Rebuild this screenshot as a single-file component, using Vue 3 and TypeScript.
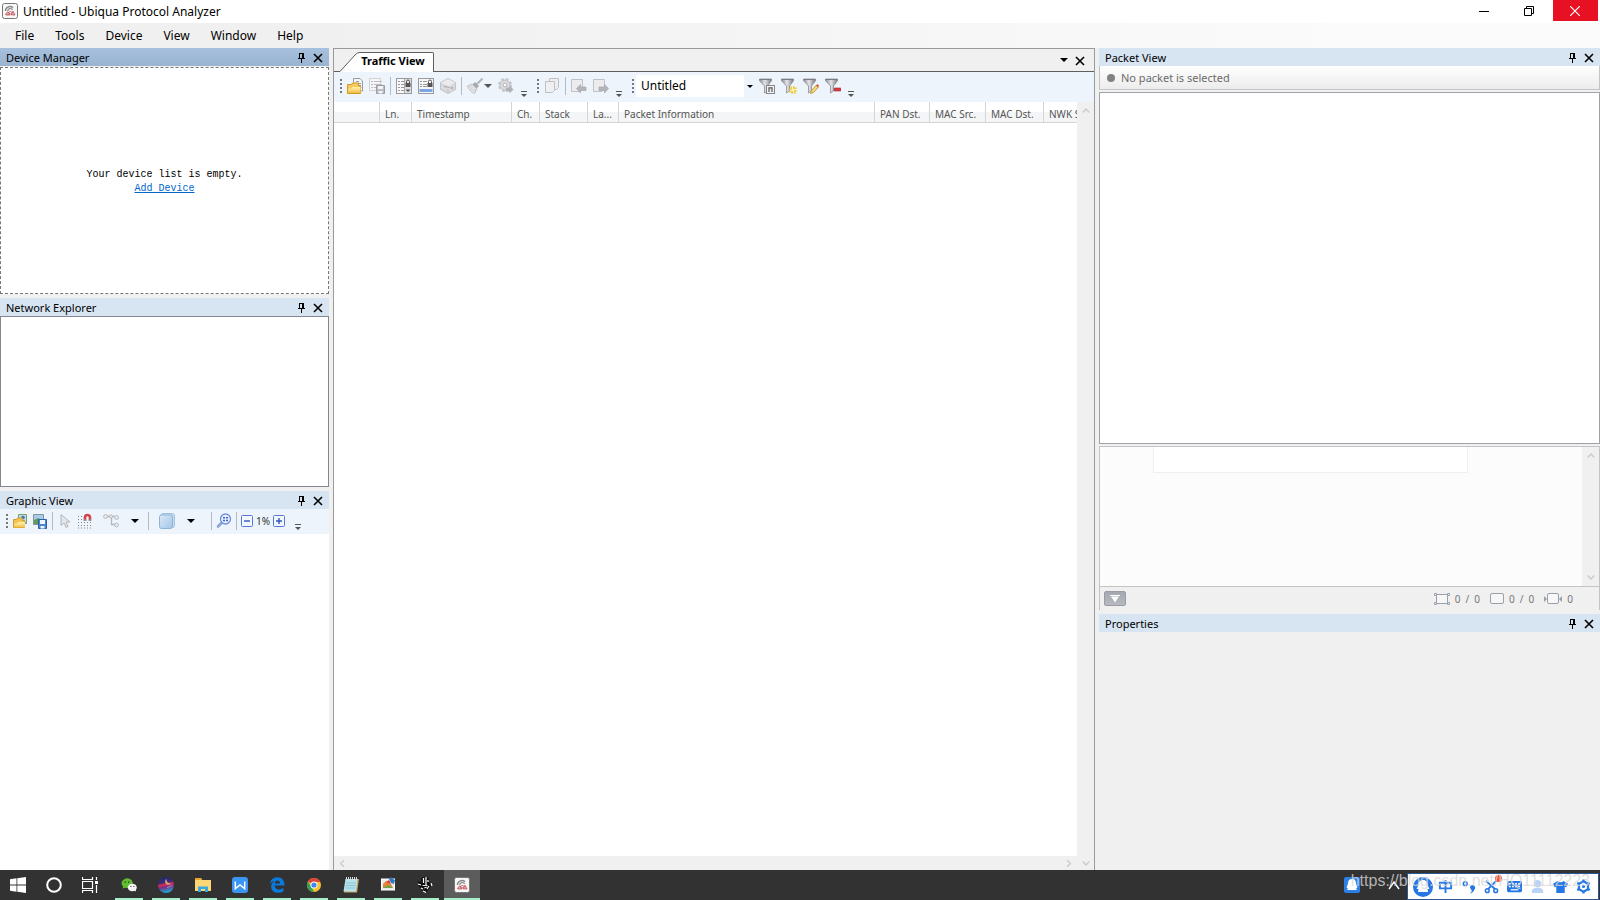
<script setup lang="ts">
import { ref } from 'vue'

interface Tool { kind: 'grip' | 'sep' | 'more' | 'btn' | 'filter' | 'drop'; icon?: string; label?: string }
interface Column { title: string; width: number }

const menus: string[] = ['File', 'Tools', 'Device', 'View', 'Window', 'Help']
const profile = ref('Untitled')

const trafficTools: Tool[] = [
  { kind: 'grip' },
  { kind: 'btn', icon: 'open', label: 'Open' },
  { kind: 'btn', icon: 'save', label: 'Save' },
  { kind: 'sep' },
  { kind: 'btn', icon: 'lockscroll', label: 'Lock scroll' },
  { kind: 'btn', icon: 'lockrow', label: 'Lock selection' },
  { kind: 'btn', icon: 'cube', label: 'Packets' },
  { kind: 'sep' },
  { kind: 'drop', icon: 'broom', label: 'Clear' },
  { kind: 'btn', icon: 'gear', label: 'Options' },
  { kind: 'more', label: 'More traffic tools' },
  { kind: 'grip' },
  { kind: 'btn', icon: 'copy', label: 'Copy' },
  { kind: 'sep' },
  { kind: 'btn', icon: 'prev', label: 'Previous' },
  { kind: 'btn', icon: 'next', label: 'Next' },
  { kind: 'more', label: 'More packet tools' },
  { kind: 'grip' },
  { kind: 'filter' },
  { kind: 'btn', icon: 'funneln', label: 'Apply filter' },
  { kind: 'btn', icon: 'funnelnew', label: 'New filter' },
  { kind: 'btn', icon: 'funneledit', label: 'Edit filter' },
  { kind: 'btn', icon: 'funneldel', label: 'Delete filter' },
  { kind: 'more', label: 'More filter tools' },
]

const columns: Column[] = [
  { title: '', width: 46 },
  { title: 'Ln.', width: 32 },
  { title: 'Timestamp', width: 100 },
  { title: 'Ch.', width: 28 },
  { title: 'Stack', width: 48 },
  { title: 'La...', width: 31 },
  { title: 'Packet Information', width: 256 },
  { title: 'PAN Dst.', width: 55 },
  { title: 'MAC Src.', width: 56 },
  { title: 'MAC Dst.', width: 58 },
  { title: 'NWK Src.', width: 58 },
]

const apps: string[] = ['wechat', 'eclipse', 'folder', 'wps', 'edge', 'chrome', 'notepad', 'paint', 'hand', 'ubiqua']
const ime: string[] = ['qq', 'zh', 'comma', 'cut', 'keys', 'person', 'shirt', 'cog']
</script>

<template>
  <div class="app">
    <svg class="defs" aria-hidden="true">
      <defs>
        <linearGradient id="g-funnel" x1="0" x2="1"><stop offset="0" stop-color="#8b8b92" /><stop offset=".45" stop-color="#e4e4ea" /><stop offset="1" stop-color="#77777e" /></linearGradient>
        <linearGradient id="g-fold" x1="0" y1="0" x2="0" y2="1"><stop offset="0" stop-color="#fff3b4" /><stop offset="1" stop-color="#f2bd44" /></linearGradient>
        <linearGradient id="g-blue" x1="0" y1="0" x2="1" y2="1"><stop offset="0" stop-color="#dcebf8" /><stop offset="1" stop-color="#9fc4e6" /></linearGradient>
        <linearGradient id="g-ecl" x1="0" y1="0" x2=".2" y2="1"><stop offset="0" stop-color="#1c2a6c" /><stop offset=".4" stop-color="#3a2a78" /><stop offset=".55" stop-color="#d8304c" /><stop offset=".68" stop-color="#7a2a86" /><stop offset="1" stop-color="#22a0cc" /></linearGradient>
      </defs>
      <symbol id="i-pin" viewBox="0 0 9 10"><path d="M2 .5h5M2.500 .5v5M5.500 .5v5M6.500 .5v5M1 5.500h7M4.500 6v4" fill="none" stroke="#000" /></symbol>
      <symbol id="i-x" viewBox="0 0 10 10"><path d="M1 1l8 8M9 1L1 9" fill="none" stroke="#000" stroke-width="1.600" /></symbol>
      <symbol id="i-down" viewBox="0 0 8 4"><path d="M0 0h8L4 4z" fill="currentColor" /></symbol>
      <symbol id="i-more" viewBox="0 0 8 7"><path d="M1 .5h6" stroke="#555" /><path d="M1 3h6L4 6z" fill="#555" /></symbol>
      <symbol id="i-chev" viewBox="0 0 8 5"><path d="M.7 4.500L4 1l3.300 3.500" fill="none" stroke="#cbcbcb" stroke-width="1.400" /></symbol>

      <symbol id="i-ubiqua" viewBox="0 0 16 16"><rect x=".5" y=".5" width="15" height="15" rx="2" fill="#f7f7f7" stroke="#777" /><path d="M3.500 8a4.500 4 0 0 1 7.500-3.300" fill="none" stroke="#888" stroke-width="1.500" /><path d="M6 8a2.200 2 0 0 1 4.500-.8" fill="none" stroke="#888" stroke-width="1.200" /><path d="M3.500 11l2.500-2.300 1.800 3.300H4zM9 11.800l2-3.600 2 3.800z" fill="#e6a5aa" stroke="#c04a54" stroke-width=".8" /><circle cx="8.300" cy="9.600" r="1.300" fill="#fff" stroke="#c04a54" stroke-width=".8" /></symbol>

      <symbol id="i-open" viewBox="0 0 16 16"><path d="M6.500.5H13L15.500 3v10h-9z" fill="#f5f5f5" stroke="#9b9b9b" /><path d="M9 3.500h3M8 5.500h6M11 7.500h3M13 9.500h1.500" stroke="#8da0b5" /><path d="M.5 15.500V6.500h4l1-1.500h6v3h2v7.500z" fill="#f5c95d" stroke="#cf9a20" /><path d="M1.500 15V10.500h3l1-1.500h8V15z" fill="url(#g-fold)" /></symbol>
      <symbol id="i-save" viewBox="0 0 16 16"><path d="M.5.500h11v12H.5z" fill="#f5f5f5" stroke="#d0d2d5" /><path d="M2 3.500h2M5 3.500h8M2 6.500h2M5 6.500h8M2 9.500h2M5 9.500h4" stroke="#b9bbc0" /><path d="M7.500 7.500h8v8h-8z" fill="#b9bcc2" stroke="#9a9da4" /><path d="M9 8h5v3H9zM9.500 13h4v2.500h-4z" fill="#f4f4f5" /></symbol>
      <symbol id="i-lockscroll" viewBox="0 0 16 16"><rect x=".5" y=".5" width="15" height="15" fill="#f8f8f8" stroke="#9b9b9b" /><path d="M2 3.500h2M5 3.500h3M2 6.500h2M5 6.500h3M2 9.500h2M5 9.500h3M2 12.500h2M5 12.500h3" stroke="#999" /><path d="M8.500 1v14" stroke="#aaa" /><rect x="9" y="1" width="6" height="14" fill="#dedee2" /><path d="M10.500 5V3.500a1.500 1.500 0 0 1 3 0V5" fill="none" stroke="#555" /><rect x="9.500" y="5" width="5" height="4" fill="#555" /><path d="M9.500 11.500h5L12 14z" fill="#555" /></symbol>
      <symbol id="i-lockrow" viewBox="0 0 16 16"><rect x=".5" y=".5" width="15" height="15" fill="#f6f6f6" stroke="#9b9b9b" /><path d="M2 3.500h2M5 3.500h4M2 6.500h2M5 6.500h4M2 8.500h2M5 8.500h4" stroke="#999" /><path d="M1.500 11h13v3h-13z" fill="#7ba5e5" /><path d="M10.500 5V3.500a1.500 1.500 0 0 1 3 0V5" fill="none" stroke="#555" /><rect x="9.500" y="5" width="5" height="4" fill="#555" /></symbol>
      <symbol id="i-cube" viewBox="0 0 16 16"><path d="M8 .5l7.500 4v7L8 15.500.5 11.500v-7z" fill="#d8d9dc" stroke="#c3c4c8" /><path d="M1 4.700L8 8l7-3.300L8 1z" fill="#ececee" /><path d="M8 8v7" stroke="#c2c3c7" /><path d="M1 9l4-2 6 2V7l4 3-4 3v-2z" fill="#b9babf" stroke="#eee" stroke-width=".6" /></symbol>
      <symbol id="i-broom" viewBox="0 0 16 16"><path d="M15.500.5L10 6" stroke="#b4b5b9" stroke-width="2" /><path d="M8 4l4 4-2.500 2.500L5.500 6.500z" fill="#a8a9ae" /><path d="M5 6l5 5-2.500 4.500c-3-1-6-4-7-7.500z" fill="#e4e5e8" stroke="#b5b6ba" stroke-width=".8" /><path d="M2.500 8.500l5.500 5.500M4 7.500l5 5" stroke="#b9babf" stroke-width=".8" stroke-dasharray="1.500 1" /></symbol>
      <symbol id="i-gear" viewBox="0 0 16 16"><circle cx="7" cy="7" r="5.700" fill="#d8d9dc" stroke="#c3c4c8" stroke-width="2.500" stroke-dasharray="2.500 2" /><circle cx="7" cy="7" r="4.800" fill="#dedfe2" stroke="#b8b9be" stroke-width=".7" /><circle cx="7" cy="7" r="2" fill="#f8f8f8" stroke="#b0b1b6" /><path d="M8 9.500h3.500V7.500l4 4-4 4v-2H8z" fill="#b1b2b7" /></symbol>
      <symbol id="i-copy" viewBox="0 0 16 16"><path d="M5.500 .5h9v9l-2 2h-7z" fill="#eee" stroke="#bfc0c4" /><path d="M1.500 3.500h9v9l-2 2h-7z" fill="#f0f0f2" stroke="#bfc0c4" /></symbol>
      <symbol id="i-prev" viewBox="0 0 16 16"><path d="M.5 1.500h11v9l-2.500 3H.5z" fill="#ececee" stroke="#c1c2c6" /><path d="M5.500 10.500l4-4V9H15v3.500H9.500V15z" fill="#b3b5ba" stroke="#a1a3a8" stroke-width=".6" /></symbol>
      <symbol id="i-next" viewBox="0 0 16 16"><path d="M.5 1.500h11v9l-2.500 3H.5z" fill="#ececee" stroke="#c1c2c6" /><path d="M15.500 10.500l-4-4V9H6v3.500h5.500V15z" fill="#b3b5ba" stroke="#a1a3a8" stroke-width=".6" /></symbol>
      <symbol id="i-funnel" viewBox="0 0 16 16"><path d="M.5 1h12v1.800L8.500 8v5l-3 2V8L.5 2.800z" fill="url(#g-funnel)" stroke="#8d8d93" stroke-width=".8" /><path d="M.5 1.500h12" stroke="#7c7c82" /></symbol>
      <symbol id="i-funneln" viewBox="0 0 16 16"><use href="#i-funnel" /><rect x="7.500" y="7.500" width="8" height="8" fill="#f3f3f3" stroke="#85858a" /><path d="M10 14V9.800h3V14" fill="none" stroke="#555" stroke-width="1.200" /></symbol>
      <symbol id="i-funnelnew" viewBox="0 0 16 16"><use href="#i-funnel" /><rect x="9.500" y="9.500" width="5" height="5" fill="#fff6b0" stroke="#edc944" stroke-width="2.400" stroke-dasharray="1.600 .9" /></symbol>
      <symbol id="i-funneledit" viewBox="0 0 16 16"><use href="#i-funnel" /><path d="M7.500 15.500l1-3 5-5.500 2 2-5 5.500z" fill="#f5dc70" stroke="#b18c2a" stroke-width=".8" /><path d="M13 7.500L14.300 6l1.700 1.700-1.200 1.500z" fill="#d4504c" /></symbol>
      <symbol id="i-funneldel" viewBox="0 0 16 16"><use href="#i-funnel" /><rect x="9" y="10" width="7" height="3" rx=".6" fill="#d43e46" stroke="#a92731" stroke-width=".6" /></symbol>

      <symbol id="i-gopen" viewBox="0 0 16 16"><path d="M6.500 1.500h8v9h-8z" fill="#bcd9f5" stroke="#7fa15d" /><path d="M7 10l3-4 4 4z" fill="#5d9a4b" /><circle cx="11" cy="4.500" r="1.800" fill="#3b7ba4" /><path d="M1.500 14.500v-8h3l1-1.500h5v2.500h2v7z" fill="#f3c452" stroke="#d39c28" /><path d="M2 14.500v-4h3l1-1.500h7v5.500z" fill="url(#g-fold)" /></symbol>
      <symbol id="i-gsave" viewBox="0 0 16 16"><path d="M1.500 1.500h10v10h-10z" fill="#a8cdec" stroke="#81939b" /><path d="M2 11V7l4-2 6 4v2z" fill="#5f9c57" /><path d="M6.500 6.500h8v9h-8z" fill="#4d85ce" stroke="#2e62a8" /><path d="M8 7h5v4H8zM8.500 13h4v2.500h-4z" fill="#eff5fb" /></symbol>
      <symbol id="i-cursor" viewBox="0 0 16 16"><path d="M4 1.500v11l3-2.500 2 4.500 2-1-2-4.500h4z" fill="#e6e7ea" stroke="#b4b6ba" /></symbol>
      <symbol id="i-magnet" viewBox="0 0 16 16"><path d="M1 3.500h5M1 6.500h5M1 9.500h13M1 12.500h13M1 15h13" stroke="#888" stroke-dasharray="1 2" /><path d="M8 7.500V4.500a2.500 2.500 0 0 1 5 0v3" fill="none" stroke="#d2444a" stroke-width="2.600" /><path d="M6.700 6.500h2.600v1.500H6.700zM11.700 6.500h2.600v1.500h-2.600z" fill="#999" /></symbol>
      <symbol id="i-tree" viewBox="0 0 16 16"><path d="M4 3.500h8M8.500 3.500v8H12" fill="none" stroke="#b5b7bc" stroke-width="1.300" /><circle cx="2.500" cy="3.500" r="1.900" fill="#eee" stroke="#b5b7bc" /><circle cx="8" cy="3.500" r="1.600" fill="#eee" stroke="#b5b7bc" /><circle cx="13.500" cy="4.500" r="1.900" fill="#eee" stroke="#b5b7bc" /><circle cx="13.500" cy="12" r="1.900" fill="#eee" stroke="#b5b7bc" /></symbol>
      <symbol id="i-layer" viewBox="0 0 16 16"><rect x="2" y=".5" width="13.500" height="14" rx="2" fill="#c8def2" stroke="#a3c1de" /><rect x=".5" y="2" width="13" height="13.500" rx="2" fill="url(#g-blue)" stroke="#8fb3d6" /></symbol>
      <symbol id="i-lens" viewBox="0 0 16 16"><path d="M6 9.500L2 13.500" stroke="#8aa3d4" stroke-width="2.600" stroke-linecap="round" /><circle cx="9.500" cy="6" r="5" fill="#e6effc" stroke="#6f8fdb" stroke-width="1.300" /><path d="M7 4h2v1.500H7zM10 4h2v1.500h-2zM7 6.700h2v1.500H7zM10 6.700h2v1.500h-2z" fill="#4166c8" /></symbol>
      <symbol id="i-minus" viewBox="0 0 12 12"><rect x=".5" y=".5" width="11" height="11" rx="1" fill="#f2f6fd" stroke="#5778d2" /><path d="M3 6h6" stroke="#3157bd" stroke-width="1.400" /></symbol>
      <symbol id="i-plus" viewBox="0 0 12 12"><rect x=".5" y=".5" width="11" height="11" rx="1" fill="#f2f6fd" stroke="#5778d2" /><path d="M3 6h6M6 3v6" stroke="#3157bd" stroke-width="1.400" /></symbol>

      <symbol id="i-win" viewBox="0 0 16 16"><path d="M0 2.200l6.500-.9v6.200H0zM7.300 1.200L16 0v7.500H7.300zM0 8.400h6.500v6.300L0 13.800zM7.300 8.400H16V16l-8.700-1.200z" fill="#fff" /></symbol>
      <symbol id="i-cortana" viewBox="0 0 16 16"><circle cx="8" cy="8" r="6.800" fill="none" stroke="#fff" stroke-width="2" /></symbol>
      <symbol id="i-tasks" viewBox="0 0 16 16"><path d="M.5 0v2.500h10V0M.5 16v-2.500h10V16M.5 4.500h10v7H.5zM14.500 0v3M14.500 8v8" fill="none" stroke="#fff" stroke-width="1.200" /><path d="M13 4h3v3h-3z" fill="#fff" /></symbol>
      <symbol id="i-wechat" viewBox="0 0 16 16"><path d="M1.500 11.500l.6-2A5.600 4.800 0 1 1 6 11l-2-.2z" fill="#62bd31" /><ellipse cx="11.300" cy="10.500" rx="4.500" ry="3.800" fill="#f4f4f4" /><path d="M13 13.500l2 1-.3-2z" fill="#f4f4f4" /><path d="M3.500 4.500h1.300v1.300H3.500zM7 4.500h1.300v1.300H7zM9.400 9h1v1h-1zM12.400 9h1v1h-1z" fill="#333" /></symbol>
      <symbol id="i-eclipse" viewBox="0 0 16 16"><circle cx="8" cy="8" r="8" fill="url(#g-ecl)" /><path d="M8.500 2c0 3.500 2 4.500 5 4.500-2 2-4.500 1.500-6 0-.8-2-.4-3.500 1-4.500z" fill="#d8a07f" /><path d="M9 10.500c2-1 4-1 5.500-2" stroke="#b9a0d0" stroke-width=".8" fill="none" /></symbol>
      <symbol id="i-folder" viewBox="0 0 16 16"><path d="M0 1h6l1 2h9v11H0z" fill="#fbd775" /><path d="M0 1h6l1 2H0z" fill="#e9a52c" /><path d="M3 15V9.500h10V15h-3v-3H6v3z" fill="#38a9e0" /></symbol>
      <symbol id="i-wps" viewBox="0 0 16 16"><rect width="16" height="16" rx="3" fill="#3a95f4" /><path d="M3.300 4.500v7.200L8 8l4.700 3.700V4.500" fill="none" stroke="#fff" stroke-width="1.500" /></symbol>
      <symbol id="i-edge" viewBox="0 0 16 16"><path d="M.8 7.500C1.500 2.500 4.500.3 8.300.3c4.700 0 7.300 3.500 7.300 8.300H5.700c.3 4.300 5 4.800 8.700 2.500v3.400C9.300 17.200 2.200 15.800 2.200 9.800c0-3 1.500-4.800 3.800-6C3.500 4 1.800 5.500.8 7.500zM5.800 6.400H11c-.1-3.800-4.800-3.800-5.200 0z" fill="#0b7bdb" /></symbol>
      <symbol id="i-chrome" viewBox="0 0 16 16"><circle cx="8" cy="8" r="7" fill="#f6c432" /><path d="M8 8L2 4.400a7 7 0 0 1 12.300.6H8z" fill="#dc4539" /><path d="M1.900 4.500L5.500 10 8 15A7 7 0 0 1 1.900 4.500z" fill="#34a158" /><circle cx="8" cy="8" r="3.500" fill="#fff" /><circle cx="8" cy="8" r="2.600" fill="#4384f0" /></symbol>
      <symbol id="i-notepad" viewBox="0 0 16 16"><path d="M3 2h13l-2 13.500H1z" fill="#c9a563" /><path d="M2.500 2h12l-1.500 12.500H.5z" fill="#b8e3ed" /><path d="M3 6h10M2.800 8.500h10M2.500 11h10" stroke="#89c2d2" /><path d="M3.500 0v3M5.500 0v3M7.500 0v3M9.500 0v3M11.500 0v3M13.500 0v3" stroke="#d7dadd" /></symbol>
      <symbol id="i-paint" viewBox="0 0 16 16"><rect x="1.500" y="2" width="13" height="11" fill="#e7ece9" stroke="#fff" /><path d="M3 11V7l3-3 5 3 2 4z" fill="#e98338" /><path d="M3 11l5-3 5 3z" fill="#65a647" /><path d="M6 5l3-2 2 4z" fill="#cf4139" /><path d="M9 2l2-2 2 2 2 1-1 4-3-1z" fill="#3277bf" /></symbol>
      <symbol id="i-hand" viewBox="0 0 16 16"><path d="M1 4l3 1V2l2-2h4l2 2v4l3-1-1 4-2 3-3 3.500H7L4 12 1 8z" fill="#111" /><path d="M6.500 1v5M9 0v8M1 7l3 1M4 11l2 1M10 12l2-3M14 6l1 3M6 14l3 1.500M11 3v2" stroke="#fff" stroke-width="1.200" /><path d="M5.500 8.500h5M7 11l3-1" stroke="#ddd" /></symbol>
      <symbol id="i-bell" viewBox="0 0 16 16"><rect width="16" height="16" rx="2" fill="#2c80e8" /><path d="M8 2c-3 0-4 2-4 4.500L2.500 11H4l-1 2h10l-1-2h1.500L12 6.500C12 4 11 2 8 2z" fill="#fff" /></symbol>

      <symbol id="i-qq" viewBox="0 0 20 20"><circle cx="10" cy="10" r="10" fill="#2478e5" /><path d="M10 3C6.500 3 5.500 5.500 5.500 8L3.500 12h2L5 15h10l-.5-3h2l-2-4c0-2.500-1-5-4.500-5z" fill="#fff" /></symbol>
      <symbol id="i-zh" viewBox="0 0 16 16"><path d="M2 4h12v6H2zM8 1v14" fill="none" stroke="#2478e5" stroke-width="2" /></symbol>
      <symbol id="i-comma" viewBox="0 0 16 16"><circle cx="4.500" cy="5" r="2" fill="none" stroke="#2478e5" stroke-width="1.600" /><path d="M9.500 9a2.800 2.800 0 1 1 5 2c-.8 2.500-2.500 4-5 4.500 1-1 2-2 2-3z" fill="#2478e5" /></symbol>
      <symbol id="i-cut" viewBox="0 0 16 16"><path d="M2 2l10 9M13 2L4 11" stroke="#2478e5" stroke-width="2" /><circle cx="3.500" cy="12.500" r="2" fill="none" stroke="#2478e5" stroke-width="1.600" /><circle cx="12.500" cy="12.500" r="2" fill="none" stroke="#2478e5" stroke-width="1.600" /></symbol>
      <symbol id="i-keys" viewBox="0 0 16 16"><rect y="2" width="16" height="12" rx="1.500" fill="#2478e5" /><path d="M2 5h12M2 8h12" stroke="#fff" stroke-width="1.500" stroke-dasharray="2 1.300" /><path d="M4 11.500h8" stroke="#fff" stroke-width="1.300" /></symbol>
      <symbol id="i-person" viewBox="0 0 16 16"><circle cx="8" cy="5" r="4" fill="#bad2f7" /><path d="M2 15v-2.500C2 10 5 9.500 8 9.500s6 .5 6 3V15z" fill="#bad2f7" /></symbol>
      <symbol id="i-shirt" viewBox="0 0 16 16"><path d="M5 2c1 2 5 2 6 0l5 3-2 4-1.500-1v7h-9V8L2 9 0 5z" fill="#2478e5" /></symbol>
      <symbol id="i-cog" viewBox="0 0 16 16"><path d="M8 2.500l4.800 2.700v5.600L8 13.500l-4.800-2.700V5.200z" fill="none" stroke="#2478e5" stroke-width="2.400" /><path d="M8 .5v2M8 13.500v2M1.300 4.200l2 1M12.700 10.800l2 1M1.300 11.800l2-1M12.700 5.200l2-1" stroke="#2478e5" stroke-width="2.400" /><circle cx="8" cy="8" r="1.700" fill="#2478e5" /></symbol>
    </svg>

    <header class="titlebar">
      <svg class="ic"><use href="#i-ubiqua" /></svg>
      <h1>Untitled - Ubiqua Protocol Analyzer</h1>
      <button class="win" aria-label="Minimize"><svg width="10" height="10"><path d="M0 5.500h10" stroke="#000" /></svg></button>
      <button class="win" aria-label="Restore"><svg width="10" height="10"><path d="M.5 2.500h7v7h-7zM2.500 2.500v-2h7v7h-2" fill="none" stroke="#000" /></svg></button>
      <button class="win close" aria-label="Close"><svg width="10" height="10"><path d="M0 0l10 10M10 0L0 10" stroke="#fff" stroke-width="1.200" /></svg></button>
    </header>

    <nav class="menu"><button v-for="m in menus" :key="m">{{ m }}</button></nav>

    <main class="work">
      <aside class="left">
        <section class="panel devices">
          <header class="head active"><h2>Device Manager</h2><button aria-label="Pin"><svg class="pin"><use href="#i-pin" /></svg></button><button aria-label="Close"><svg class="x"><use href="#i-x" /></svg></button></header>
          <div class="empty"><p>Your device list is empty.</p><a href="#add">Add Device</a></div>
        </section>
        <section class="panel network">
          <header class="head"><h2>Network Explorer</h2><button aria-label="Pin"><svg class="pin"><use href="#i-pin" /></svg></button><button aria-label="Close"><svg class="x"><use href="#i-x" /></svg></button></header>
          <div class="box"></div>
        </section>
        <section class="panel graphic">
          <header class="head"><h2>Graphic View</h2><button aria-label="Pin"><svg class="pin"><use href="#i-pin" /></svg></button><button aria-label="Close"><svg class="x"><use href="#i-x" /></svg></button></header>
          <div class="gbar">
            <i class="grip"></i>
            <button class="gb" aria-label="Open image"><svg class="ic"><use href="#i-gopen" /></svg></button>
            <button class="gb" aria-label="Save image"><svg class="ic"><use href="#i-gsave" /></svg></button>
            <i class="sep"></i>
            <button class="gb" aria-label="Select"><svg class="ic"><use href="#i-cursor" /></svg></button>
            <button class="gb" aria-label="Snap to grid"><svg class="ic"><use href="#i-magnet" /></svg></button>
            <button class="gd" aria-label="Layout"><svg class="ic"><use href="#i-tree" /></svg><svg class="down"><use href="#i-down" /></svg></button>
            <i class="sep"></i>
            <button class="gd" aria-label="Layers"><svg class="ic"><use href="#i-layer" /></svg><svg class="down"><use href="#i-down" /></svg></button>
            <div class="zoomset">
              <i class="sep"></i>
              <button class="gb" aria-label="Zoom to fit"><svg class="ic"><use href="#i-lens" /></svg></button>
              <i class="sep"></i>
              <button class="zoom" aria-label="Zoom out"><svg><use href="#i-minus" /></svg></button>
              <span class="pct">1%</span>
              <button class="zoom" aria-label="Zoom in"><svg><use href="#i-plus" /></svg></button>
            </div>
            <button class="more" aria-label="More graphic tools"><svg><use href="#i-more" /></svg></button>
          </div>
          <div class="canvas"></div>
        </section>
      </aside>

      <section class="traffic">
        <div class="tabs">
          <svg class="slope" width="20" height="20" viewBox="0 0 20 20"><path d="M0 20L15 3q3-3 5-2.500V20z" fill="#fff" /><path d="M0 19.500L15 3q3-3 5-2.500" fill="none" stroke="#5e5e5e" /></svg>
          <button class="tab">Traffic View</button>
          <span class="fill"></span>
          <button class="tb" aria-label="Tab list"><svg class="down"><use href="#i-down" /></svg></button>
          <button class="tb" aria-label="Close tab"><svg class="x"><use href="#i-x" /></svg></button>
        </div>
        <div class="tools">
          <template v-for="(t, i) in trafficTools" :key="i">
            <i v-if="t.kind === 'grip'" class="grip"></i>
            <i v-else-if="t.kind === 'sep'" class="sep"></i>
            <button v-else-if="t.kind === 'more'" class="more" :aria-label="t.label"><svg><use href="#i-more" /></svg></button>
            <label v-else-if="t.kind === 'filter'" class="filter">
              <select v-model="profile" aria-label="Filter profile"><option>Untitled</option></select>
              <span class="arrow"><svg><use href="#i-down" /></svg></span>
            </label>
            <button v-else class="tool" :aria-label="t.label"><svg class="ic"><use :href="'#i-' + t.icon" /></svg><svg v-if="t.kind === 'drop'" class="down"><use href="#i-down" /></svg></button>
          </template>
        </div>
        <div class="body">
          <div class="grid">
            <table>
              <colgroup><col v-for="(c, i) in columns" :key="i" :style="{ width: c.width + 'px' }" /></colgroup>
              <thead><tr><th v-for="(c, i) in columns" :key="i" scope="col">{{ c.title }}</th></tr></thead>
            </table>
          </div>
          <div class="vscroll"><svg class="chev"><use href="#i-chev" /></svg></div>
          <div class="hscroll"><svg class="chev lt"><use href="#i-chev" /></svg><svg class="chev rt"><use href="#i-chev" /></svg></div>
          <div class="corner"><svg class="chev dn"><use href="#i-chev" /></svg></div>
        </div>
      </section>

      <aside class="right">
        <section class="panel packet">
          <header class="head"><h2>Packet View</h2><button aria-label="Pin"><svg class="pin"><use href="#i-pin" /></svg></button><button aria-label="Close"><svg class="x"><use href="#i-x" /></svg></button></header>
          <div class="status"><i></i>No packet is selected</div>
          <div class="tree"></div>
          <div class="hex">
            <div class="view"><div class="sheet"></div><div class="vscroll"><svg class="chev"><use href="#i-chev" /></svg><svg class="chev dn"><use href="#i-chev" /></svg></div></div>
            <div class="foot">
              <button class="toggle" aria-label="Collapse"><svg width="10" height="8"><path d="M0 0h10v1H0zM1 1.500h8L5 7.500z" fill="#fff" /></svg></button>
              <span class="count"><svg width="16" height="12"><path d="M2.500 1.500h11v9h-11z" fill="#f7f7f7" stroke="#9aa0aa" /><path d="M.5.500h2v2h-2zM13.500.5h2v2h-2zM.5 9.500h2v2h-2zM13.500 9.500h2v2h-2z" fill="#f7f7f7" stroke="#9aa0aa" /></svg><span>0</span><span>/</span><span>0</span></span>
              <span class="count"><svg width="14" height="12"><rect x=".5" y=".5" width="13" height="10" rx="1.500" fill="#f7f7f7" stroke="#9aa0aa" /></svg><span>0</span><span>/</span><span>0</span></span>
              <span class="count"><svg width="18" height="12"><rect x="3.500" y=".5" width="11" height="10" rx="1.500" fill="#f7f7f7" stroke="#9aa0aa" /><path d="M0 3l3 3-3 3zM18 3l-3 3 3 3z" fill="#9aa0aa" /></svg><span>0</span></span>
            </div>
          </div>
        </section>
        <section class="panel props">
          <header class="head"><h2>Properties</h2><button aria-label="Pin"><svg class="pin"><use href="#i-pin" /></svg></button><button aria-label="Close"><svg class="x"><use href="#i-x" /></svg></button></header>
        </section>
      </aside>
    </main>

    <footer class="taskbar">
      <button aria-label="Start"><svg class="ic"><use href="#i-win" /></svg></button>
      <button aria-label="Cortana"><svg class="ic"><use href="#i-cortana" /></svg></button>
      <button aria-label="Task view"><svg class="ic"><use href="#i-tasks" /></svg></button>
      <div class="apps">
        <button v-for="a in apps" :key="a" :class="{ on: a === 'ubiqua' }" :aria-label="a"><svg class="ic"><use :href="'#i-' + a" /></svg></button>
      </div>
      <div class="tray">
        <svg class="ic"><use href="#i-bell" /></svg>
        <svg width="12" height="10"><path d="M1 9l5-7 5 7" fill="none" stroke="#fff" stroke-width="1.400" /></svg>
      </div>
      <div class="ime">
        <button v-for="n in ime" :key="n" :aria-label="n"><svg :class="n"><use :href="'#i-' + n" /></svg><b v-if="n === 'cut'"></b></button>
      </div>
      <span class="mark">https://blog.csdn.net/HQ11112223</span>
    </footer>
  </div>
</template>

<style>
body { margin: 0; background: #f0f0f0; }
</style>

<style scoped>
* { box-sizing: border-box; }
.app { display: flex; flex-direction: column; min-height: 100vh; background: #f0f0f0; color: #000; font: 12px/16px "Noto Sans", "Open Sans", sans-serif; }
.defs { position: absolute; width: 0; height: 0; }
svg { display: block; flex: none; }
button { display: flex; align-items: center; justify-content: center; margin: 0; padding: 0; border: 0; background: none; color: inherit; font: inherit; }
h1, h2, p { margin: 0; font: inherit; }
.ic { width: 16px; height: 16px; }
.down { width: 8px; height: 4px; }
.pin { width: 9px; height: 10px; }
.x { width: 10px; height: 10px; }

.titlebar { display: flex; height: 23px; background: #fff; padding-left: 2px; }
.titlebar .ic { margin-top: 3px; }
.titlebar h1 { flex: 1; padding: 4px 0 0 5px; }
.win { width: 45px; height: 21px; padding-right: 3px; }
.win.close { background: #e81123; margin-right: 2px; padding-right: 1px; }

.menu { display: flex; gap: 21px; height: 25px; padding-left: 15px; background: linear-gradient(90deg, #f0f0f0 300px, #fbfbfb 85%); }

.work { flex: 1; display: grid; grid-template-columns: 329px minmax(0, 1fr) 501px; column-gap: 4px; }
.left, .right, .panel { display: flex; flex-direction: column; }
.left { gap: 4px; }
.right { gap: 4px; }
.head { display: flex; align-items: center; gap: 7px; height: 18px; padding: 2px 6px 0 6px; background: #d7e4f2; font-size: 11px; }
.head.active { background: linear-gradient(#a6c0dd, #99b4d1); }
.head h2 { flex: 1; }

.devices { height: 246px; }
.empty { flex: 1; display: flex; flex-direction: column; align-items: center; justify-content: center; margin-top: 1px; padding-top: 3px; border: 1px dashed #777; background: #fff; font: 10px/14px "Liberation Mono", monospace; }
.empty a { color: #0066cc; }
.network { height: 189px; }
.box { flex: 1; border: 1px solid #828790; background: #fff; }
.graphic { flex: 1; }
.gbar { display: flex; align-items: center; height: 25px; padding-bottom: 1px; background: #edf4fc; }
.gb { width: 20px; }
.gd { width: 51px; gap: 12px; }
.canvas { flex: 1; background: #fff; }
.zoomset { display: flex; align-items: center; padding: 0 4px 0 7px; }
.zoom { width: 16px; }
.zoom svg { width: 12px; height: 12px; }
.pct { width: 16px; text-align: center; font-size: 10px; color: #333; }

.grip { width: 10px; height: 14px; background: repeating-linear-gradient(#777 0 2px, transparent 2px 4px) 6px 0 / 2px 100% no-repeat; }
.sep { width: 5px; height: 18px; background: linear-gradient(#b5bcc6, #b5bcc6) 2px 0 / 1px 100% no-repeat; }
.more { width: 14px; height: 100%; align-items: flex-end; padding-bottom: 2px; }
.more svg { width: 8px; height: 7px; }

.traffic { display: flex; flex-direction: column; min-width: 0; border: solid #9a9a9a; border-width: 1px 1px 0; }
.tabs { display: flex; align-items: flex-end; height: 23px; }
.tabs::before { content: ""; width: 6px; align-self: stretch; border-bottom: 1px solid #5e5e5e; }
.tab { height: 20px; padding: 0 7px 4px 0; background: #fff; border: solid #5e5e5e; border-width: 1px 1px 0 0; border-radius: 0 2px 0 0; font-weight: 700; font-size: 11px; min-width: 74px; justify-content: center; }
.fill { flex: 1; align-self: stretch; border-bottom: 1px solid #5e5e5e; }
.tb { height: 23px; width: 17px; border-bottom: 1px solid #5e5e5e; }
.tb:last-child { padding: 1px 6px 0 0; width: 22px; }
.tools { display: flex; align-items: center; height: 30px; padding-bottom: 2px; background: #edf4fc; }
.tool { height: 22px; padding: 0 3px; gap: 1px; color: #555; }
.filter { display: flex; width: 120px; height: 22px; background: #fff; }
.filter select { flex: 1; min-width: 0; padding: 0 0 0 5px; border: 0; appearance: none; background: none; color: #000; font: 12px/22px "Noto Sans", sans-serif; }
.arrow { display: flex; align-items: center; justify-content: center; width: 12px; background: #edf4fc; }
.arrow svg { width: 6px; height: 3px; }

.body { flex: 1; display: grid; grid-template: 1fr 14px / minmax(0, 1fr) 17px; background: #f0f0f0; }
.grid { overflow: hidden; background: #fff; }
table { table-layout: fixed; width: 768px; border-collapse: separate; border-spacing: 0; }
th { height: 21px; padding: 3px 0 0 5px; border: solid #d5d5d5; border-width: 0 1px 1px 0; background: linear-gradient(#fff 50%, #f4f5f6 50%); overflow: hidden; white-space: nowrap; text-align: left; font: 10px/16px "Noto Sans", sans-serif; color: #555; }
.vscroll { display: flex; flex-direction: column; align-items: center; justify-content: space-between; padding: 6px 0; background: #f0f0f0; }
.hscroll { display: flex; align-items: center; justify-content: space-between; padding: 0 4px; }
.corner { display: flex; align-items: center; justify-content: center; }
.chev { width: 8px; height: 5px; }
.chev.dn { transform: rotate(180deg); }
.chev.lt { transform: rotate(-90deg); }
.chev.rt { transform: rotate(90deg); }

.status { display: flex; align-items: center; gap: 6px; height: 24px; padding-left: 7px; border: solid #c4c4c4; border-width: 0 1px 1px; background: linear-gradient(#fff, #ececec); font-size: 11px; color: #6b6b6b; }
.status i { width: 8px; height: 8px; border-radius: 4px; background: #828282; }
.tree { height: 352px; margin-top: 2px; border: 1px solid #a0a0a8; background: #fff; }
.hex { margin-top: 2px; border: solid #c4c4c4; border-width: 1px 1px 0; }
.view { display: grid; grid-template-columns: minmax(0, 1fr) 17px; height: 139px; background: #fcfcfc; }
.sheet { width: 315px; height: 26px; margin-left: 53px; border: solid #efefef; border-width: 0 1px 1px; background: #fff; }
.foot { display: flex; align-items: center; gap: 10px; height: 24px; padding: 0 26px 0 4px; border-top: 1px solid #c4c4c4; font-size: 10px; color: #777; }
.toggle { width: 22px; height: 15px; margin-right: auto; border: 1px solid #999ca3; border-radius: 2px; background: linear-gradient(#a5a8b0, #b7bac0); }
.count { display: flex; align-items: center; gap: 5px; }

.taskbar { position: relative; display: flex; height: 30px; background: #323232; }
.taskbar > button, .apps button { width: 36px; height: 30px; }
.apps { display: flex; gap: 1px; margin-left: 3px; }
.apps button { background: linear-gradient(#a5f0c8, #a5f0c8) center bottom / 28px 2px no-repeat; }
.apps .on { background: linear-gradient(#a5f0c8, #a5f0c8) center bottom / 36px 2px no-repeat #5c5c5c; }
.tray { display: flex; align-items: center; gap: 28px; margin-left: auto; padding-right: 7px; }
.ime { display: flex; align-items: center; height: 27px; margin: 3px 1px 0 0; padding: 0 3px; background: #fff; border: 1px solid #2b5797; }
.ime button { position: relative; width: 23px; height: 24px; }
.ime svg { width: 15px; height: 15px; }
.ime .qq { width: 20px; height: 20px; }
.ime b { position: absolute; top: 0; right: 1px; width: 7px; height: 7px; border-radius: 4px; background: #f4502f; }
.mark { position: absolute; right: 10px; top: 1px; font: 16px/20px "Liberation Sans", Arial, sans-serif; color: rgba(215, 215, 215, .8); pointer-events: none; }
</style>
